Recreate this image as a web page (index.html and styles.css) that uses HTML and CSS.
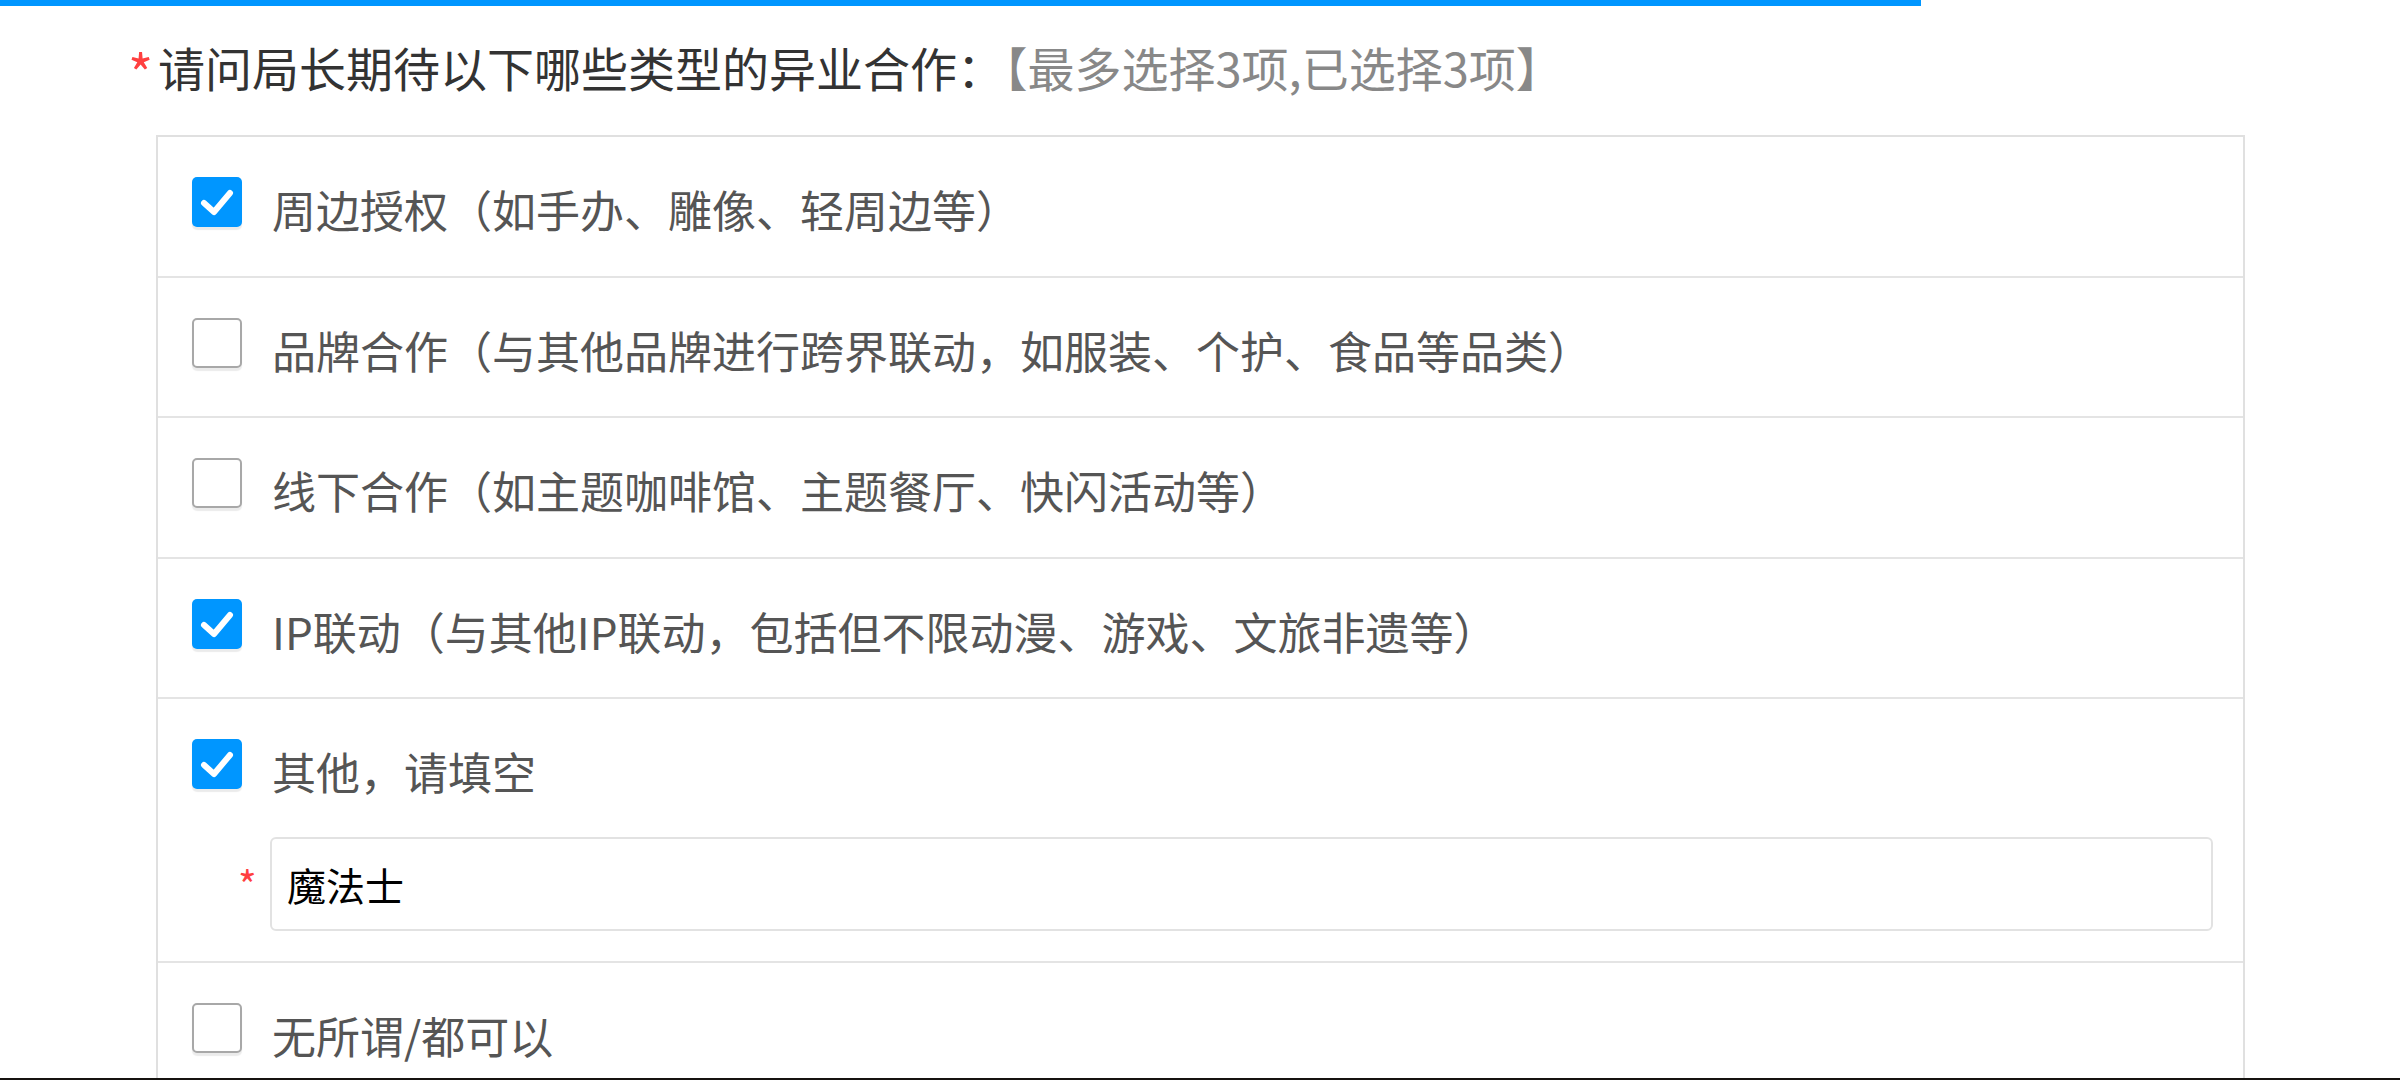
FILE: index.html
```html
<!DOCTYPE html>
<html lang="zh-CN">
<head>
<meta charset="utf-8">
<title>问卷</title>
<link rel="stylesheet" href="styles.css">
</head>
<body>
<div class="screen">
  <div class="progress"><div class="progress-fill" style="width:1921px"></div></div>
  <section class="question">
    <h2 class="q-title"><span class="req">*</span>请问局长期待以下哪些类型的异业合作：<span class="hint">【最多选择3项,已选择3项】</span></h2>
    <div class="options">
      <div class="opt">
        <div class="opt-line">
          <span class="cb cb-on"><svg viewBox="0 0 50 50" width="50" height="50"><polyline points="12,26 22,35 38,16" fill="none" stroke="#fff" stroke-width="6" stroke-linecap="round" stroke-linejoin="round"/></svg></span>
          <span class="opt-text">周边授权（如手办、雕像、轻周边等）</span>
        </div>
      </div>
      <div class="opt">
        <div class="opt-line">
          <span class="cb"></span>
          <span class="opt-text">品牌合作（与其他品牌进行跨界联动，如服装、个护、食品等品类）</span>
        </div>
      </div>
      <div class="opt">
        <div class="opt-line">
          <span class="cb"></span>
          <span class="opt-text">线下合作（如主题咖啡馆、主题餐厅、快闪活动等）</span>
        </div>
      </div>
      <div class="opt">
        <div class="opt-line">
          <span class="cb cb-on"><svg viewBox="0 0 50 50" width="50" height="50"><polyline points="12,26 22,35 38,16" fill="none" stroke="#fff" stroke-width="6" stroke-linecap="round" stroke-linejoin="round"/></svg></span>
          <span class="opt-text">IP联动（与其他IP联动，包括但不限动漫、游戏、文旅非遗等）</span>
        </div>
      </div>
      <div class="opt">
        <div class="opt-line">
          <span class="cb cb-on"><svg viewBox="0 0 50 50" width="50" height="50"><polyline points="12,26 22,35 38,16" fill="none" stroke="#fff" stroke-width="6" stroke-linecap="round" stroke-linejoin="round"/></svg></span>
          <span class="opt-text">其他，请填空</span>
        </div>
        <div class="fill">
          <span class="fill-req">*</span>
          <input class="fill-input" type="text" value="魔法士" readonly>
        </div>
      </div>
      <div class="opt">
        <div class="opt-line">
          <span class="cb"></span>
          <span class="opt-text">无所谓/都可以</span>
        </div>
      </div>
    </div>
  </section>
</div>
<div class="bottom-edge"></div>
</body>
</html>
```

FILE: styles.css
```css
html, body {
  margin: 0;
  padding: 0;
  background: #ffffff;
}

body {
  height: 1080px;
  display: flex;
  flex-direction: column;
  overflow: hidden;
  font-family: "Noto Sans CJK SC", "Noto Sans", sans-serif;
}

.screen {
  flex: 1;
  min-height: 0;
  overflow: hidden;
}

.progress {
  height: 6px;
  width: 100%;
}

.progress-fill {
  height: 6px;
  background: #0096ff;
}

.q-title {
  margin: 37px 0 0 128px;
  font-size: 47px;
  line-height: 47px;
  font-weight: 400;
  color: #333333;
  white-space: nowrap;
}

.req {
  display: inline-block;
  width: 30px;
  font-size: 54px;
  line-height: 0;
  vertical-align: -8px;
  color: #ff4040;
}

.hint {
  color: #888888;
}

.options {
  margin: 45px 0 0 156px;
  width: 2089px;
  box-sizing: border-box;
  border: 2px solid #e0e0e0;
  border-bottom: none;
}

.opt {
  border-bottom: 2px solid #e4e4e4;
}

.opt-line {
  display: flex;
  align-items: flex-start;
  height: 98.5px;
  padding: 40px 0 0 34px;
}

.cb {
  flex: none;
  width: 50px;
  height: 50px;
  box-sizing: border-box;
  border: 2px solid #a8a8a8;
  border-radius: 5px;
  background: #ffffff;
  box-shadow: 0 3px 1px rgba(0, 0, 0, 0.08);
}

.cb svg {
  display: block;
}

.cb-on {
  border: none;
  background: #0096ff;
}

.opt-text {
  margin: 10px 0 0 30px;
  font-size: 44px;
  line-height: 44px;
  color: #555555;
  white-space: nowrap;
}

.fill {
  display: flex;
  align-items: center;
  margin: -1px 30px 0 80px;
  padding-bottom: 30.5px;
}

.fill-req {
  flex: none;
  width: 32px;
  font-size: 40px;
  line-height: 40px;
  color: #ff4040;
}

.fill-input {
  flex: 1;
  min-width: 0;
  height: 94px;
  box-sizing: border-box;
  border: 2px solid #e2e2e2;
  border-radius: 6px;
  padding: 0 15px;
  font-family: "Noto Sans CJK SC", "Noto Sans", sans-serif;
  font-size: 39px;
  color: #000000;
  background: #ffffff;
  outline: none;
}

.bottom-edge {
  flex: none;
  height: 2px;
  background: #161310;
}
```
